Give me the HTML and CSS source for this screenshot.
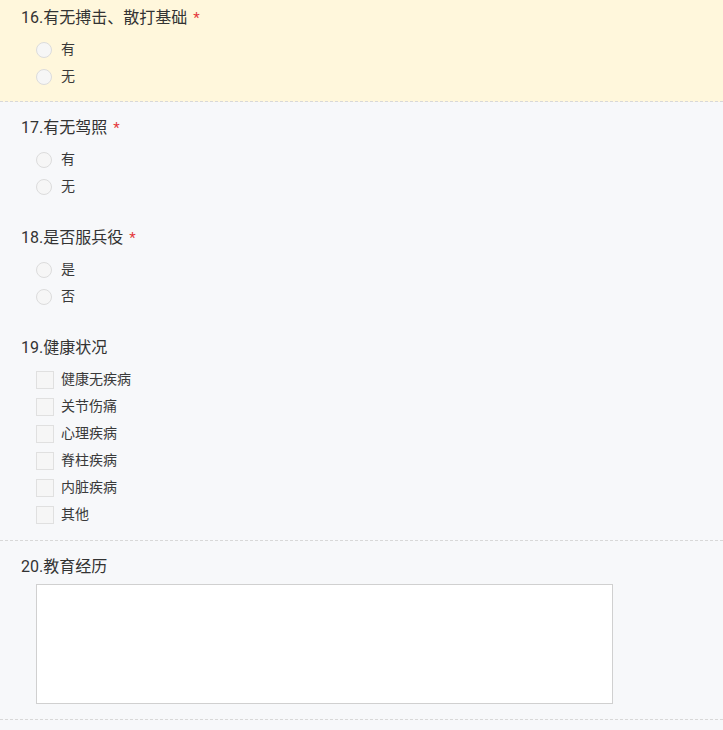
FILE: index.html
```html
<!DOCTYPE html>
<html lang="zh-CN">
<head>
<meta charset="utf-8">
<title>问卷</title>
<link rel="stylesheet" href="styles.css">
</head>
<body>
<div class="page">
  <div class="question question--active question--divided">
    <div class="q-title">16.有无搏击、散打基础<span class="req">*</span></div>
    <ul class="options">
      <li class="option"><span class="ctl"><span class="radio"></span></span><span class="label">有</span></li>
      <li class="option"><span class="ctl"><span class="radio"></span></span><span class="label">无</span></li>
    </ul>
  </div>
  <div class="question">
    <div class="q-title">17.有无驾照<span class="req">*</span></div>
    <ul class="options">
      <li class="option"><span class="ctl"><span class="radio"></span></span><span class="label">有</span></li>
      <li class="option"><span class="ctl"><span class="radio"></span></span><span class="label">无</span></li>
    </ul>
  </div>
  <div class="question">
    <div class="q-title">18.是否服兵役<span class="req">*</span></div>
    <ul class="options">
      <li class="option"><span class="ctl"><span class="radio"></span></span><span class="label">是</span></li>
      <li class="option"><span class="ctl"><span class="radio"></span></span><span class="label">否</span></li>
    </ul>
  </div>
  <div class="question question--divided">
    <div class="q-title">19.健康状况</div>
    <ul class="options">
      <li class="option"><span class="ctl"><span class="check"></span></span><span class="label">健康无疾病</span></li>
      <li class="option"><span class="ctl"><span class="check"></span></span><span class="label">关节伤痛</span></li>
      <li class="option"><span class="ctl"><span class="check"></span></span><span class="label">心理疾病</span></li>
      <li class="option"><span class="ctl"><span class="check"></span></span><span class="label">脊柱疾病</span></li>
      <li class="option"><span class="ctl"><span class="check"></span></span><span class="label">内脏疾病</span></li>
      <li class="option"><span class="ctl"><span class="check"></span></span><span class="label">其他</span></li>
    </ul>
  </div>
  <div class="question question--divided question--text">
    <div class="q-title">20.教育经历</div>
    <div class="answer-box"></div>
  </div>
</div>
</body>
</html>
```

FILE: styles.css
```css
html, body {
  margin: 0;
  padding: 0;
  background: #f7f8fa;
}
body {
  font-family: Roboto, "Noto Sans CJK SC", "Noto Sans", sans-serif;
  color: #333;
  overflow: hidden;
}
.page {
  margin-top: -8px;
}
.question {
  padding: 16px 0 12px 21px;
}
.question--active {
  background: #fff7dc;
  padding-bottom: 11px;
}
.question--divided {
  border-bottom: 1px dashed #d8d8d8;
}
.q-title {
  font-size: 16px;
  line-height: 20px;
  height: 20px;
  color: #333;
  margin-bottom: 8px;
  white-space: nowrap;
}
.req {
  color: #e4393c;
  margin-left: 6px;
  font-size: 15px;
}
.options {
  list-style: none;
  margin: 0;
  padding: 0 0 0 15px;
}
.option {
  display: flex;
  align-items: center;
  height: 27px;
}
.ctl {
  width: 18px;
  height: 18px;
  margin-right: 7px;
  display: flex;
  align-items: center;
}
.radio {
  width: 14px;
  height: 14px;
  border-radius: 50%;
  border: 1px solid #dcdcdc;
  background: #f6f6f6;
}
.check {
  width: 16px;
  height: 16px;
  border: 1px solid #e0e0e0;
  background: #f6f6f6;
}
.label {
  font-size: 14px;
  line-height: 18px;
  padding-bottom: 2px;
  color: #3a3a3a;
}
.question--text {
  padding-bottom: 15px;
}
.question--text .q-title {
  margin-bottom: 7px;
}
.answer-box {
  margin: 0 0 0 15px;
  width: 575px;
  height: 118px;
  background: #fff;
  border: 1px solid #d0d0d0;
}
```
